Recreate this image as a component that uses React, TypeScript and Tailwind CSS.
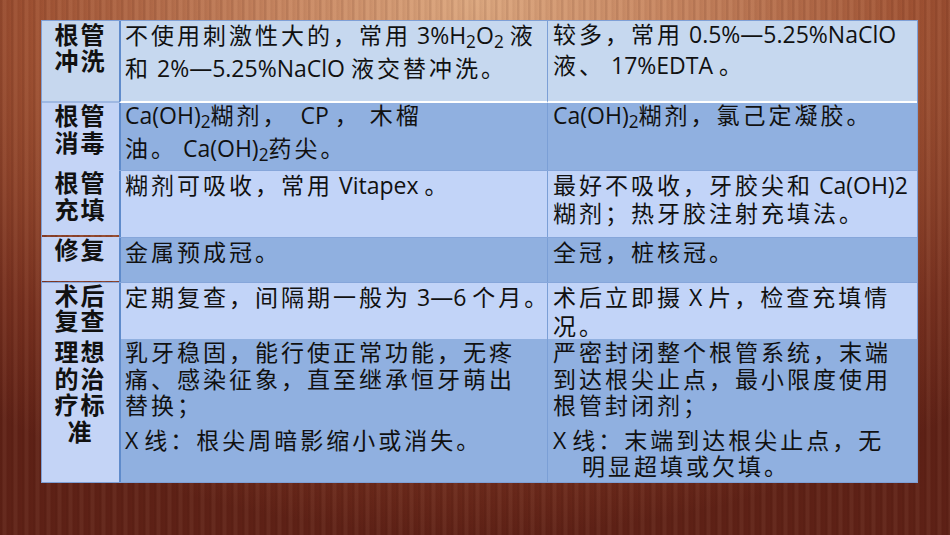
import type { ReactNode } from "react";

// Latin runs keep normal spacing; the CJK text around them is tracked out
function En({ children }: { children: ReactNode }) {
  return <span className="tracking-normal">{children}</span>;
}

interface Row {
  label: string[];
  rowClass: string;
  labelClass: string;
  cellBg: string;
  midClass: string;
  rightClass: string;
  mid: ReactNode;
  right: ReactNode;
}

const rows: Row[] = [
  {
    label: ["根管", "冲洗"],
    rowClass: "h-[82px]",
    labelClass: "bg-[#c6d7ee] border-b-2 border-[#9fb8e2] pt-[1px] leading-[26px]",
    cellBg: "bg-[#c6d8ef] border-b-2 border-white",
    midClass: "-mt-[2px] leading-[33px]",
    rightClass: "-mt-[2px] leading-[31px]",
    mid: (
      <>
        {"不使用刺激性大的，常用"}
        <En>
          {" 3%H"}
          <sub>2</sub>O<sub>2</sub>{" "}
        </En>
        {"液"}
        <br />
        {"和"}
        <En>{" 2%—5.25%NaClO "}</En>
        {"液交替冲洗。"}
      </>
    ),
    right: (
      <>
        {"较多，常用"}
        <En>{" 0.5%—5.25%NaClO"}</En>
        <br />
        {"液、"}
        <En>{" 17%EDTA "}</En>
        {"。"}
      </>
    ),
  },
  {
    label: ["根管", "消毒"],
    rowClass: "h-[67px]",
    labelClass: "bg-[#c4d4f6] leading-[26.5px]",
    cellBg: "bg-[#90b0e0]",
    midClass: "-mt-[4px] leading-[33px]",
    rightClass: "-mt-[4px] leading-[33px]",
    mid: (
      <>
        <En>
          Ca(OH)<sub>2</sub>
        </En>
        {"糊剂，"}
        <En>{"  CP "}</En>
        {"， 木榴"}
        <br />
        {"油。"}
        <En>
          {" Ca(OH)"}
          <sub>2</sub>
        </En>
        {"药尖。"}
      </>
    ),
    right: (
      <>
        <En>
          Ca(OH)<sub>2</sub>
        </En>
        {"糊剂，氯己定凝胶。"}
      </>
    ),
  },
  {
    label: ["根管", "充填"],
    rowClass: "h-[67px] border-t border-[#86a6da]",
    labelClass: "bg-[#c4d4f6] -mt-[2px] leading-[27px]",
    cellBg: "bg-[#c2d4f8]",
    midClass: "leading-[28px]",
    rightClass: "leading-[28px]",
    mid: (
      <>
        {"糊剂可吸收，常用"}
        <En>{" Vitapex "}</En>
        {"。"}
      </>
    ),
    right: (
      <>
        {"最好不吸收，牙胶尖和"}
        <En>{" Ca(OH)2"}</En>
        <br />
        {"糊剂；热牙胶注射充填法。"}
      </>
    ),
  },
  {
    label: ["修复"],
    rowClass: "h-[45px] border-t border-[#86a6da]",
    labelClass: "bg-[#c4d4f6] -mt-[1px] leading-[26px]",
    cellBg: "bg-[#90b0e0]",
    midClass: "leading-[28px]",
    rightClass: "leading-[28px]",
    mid: "金属预成冠。",
    right: "全冠，桩核冠。",
  },
  {
    label: ["术后", "复查"],
    rowClass: "h-[56px] border-t border-[#86a6da]",
    labelClass: "bg-[#c4d4f6] leading-[25px]",
    cellBg: "bg-[#c2d4f8]",
    midClass: "leading-[29px]",
    rightClass: "leading-[29px]",
    mid: (
      <>
        {"定期复查，间隔期一般为"}
        <En>{" 3—6 "}</En>
        {"个月。"}
      </>
    ),
    right: (
      <>
        {"术后立即摄"}
        <En>{" X "}</En>
        {"片，检查充填情"}
        <br />
        {"况。"}
      </>
    ),
  },
  {
    label: ["理想", "的治", "疗标", "准"],
    rowClass: "h-[144px] border-t border-[#86a6da]",
    labelClass: "bg-[#c4d4f6] leading-[26.5px]",
    cellBg: "bg-[#90b0e0]",
    midClass: "leading-[26.5px]",
    rightClass: "leading-[26.5px]",
    mid: (
      <>
        <p>
          {"乳牙稳固，能行使正常功能，无疼"}
          <br />
          {"痛、感染征象，直至继承恒牙萌出"}
          <br />
          {"替换；"}
        </p>
        <p className="mt-[8px]">
          <En>{"X "}</En>
          {"线：根尖周暗影缩小或消失。"}
        </p>
      </>
    ),
    right: (
      <>
        <p>
          {"严密封闭整个根管系统，末端"}
          <br />
          {"到达根尖止点，最小限度使用"}
          <br />
          {"根管封闭剂；"}
        </p>
        <p className="mt-[8px]">
          <En>{"X "}</En>
          {"线：末端到达根尖止点，无"}
          <span className="block pl-[29px]">{"明显超填或欠填。"}</span>
        </p>
      </>
    ),
  },
];

export default function App() {
  return (
    <div className="w-[950px] h-[535px] overflow-hidden pt-[20px] pl-[41px] bg-[repeating-linear-gradient(90deg,rgba(60,20,10,0.10)_0px,rgba(60,20,10,0.10)_2px,rgba(255,220,190,0.05)_3px,rgba(255,220,190,0.05)_6px,rgba(60,20,10,0.06)_7px,transparent_11px),radial-gradient(ellipse_80%_100%_at_50%_0%,#dca880_0%,#c68560_26%,#9f5233_58%,#76301f_82%,#5e2116_100%)]">
      <div className="w-[877px] border border-[#7fa0d6] font-['Open_Sans','Noto_Sans_CJK_SC',sans-serif] text-[23px] text-[#111] whitespace-pre">
        {rows.map((r, i) => (
          <div key={i} className={`grid grid-cols-[77px_428px_370px] ${r.rowClass}`}>
            <div className={`h-full flex flex-col items-center font-bold text-[24px] tracking-[2px] ${r.labelClass}`}>
              {r.label.map((l) => (
                <span key={l}>{l}</span>
              ))}
            </div>
            <div className={`h-full border-l-2 border-l-[#5f8bcb] pl-[4px] tracking-[3px] overflow-visible ${r.cellBg}`}>
              <div className={r.midClass}>{r.mid}</div>
            </div>
            <div className={`h-full border-l border-l-[#7b9fd6] pl-[5px] tracking-[3px] ${r.cellBg}`}>
              <div className={r.rightClass}>{r.right}</div>
            </div>
          </div>
        ))}
      </div>
    </div>
  );
}
